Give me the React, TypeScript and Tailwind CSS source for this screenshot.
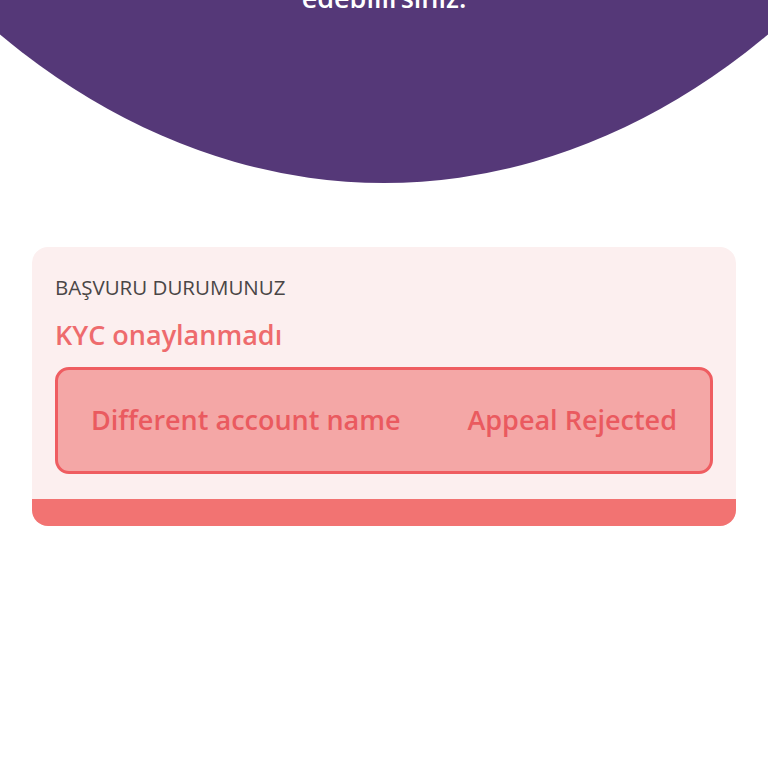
import React from "react";

export default function App() {
  return (
    <div
      className="relative min-h-[768px] w-[768px] overflow-hidden bg-white"
      style={{ fontFamily: "'Open Sans', 'Noto Sans', sans-serif" }}
    >
      <div className="absolute left-[-384px] top-[-2033px] h-[2216px] w-[1536px] rounded-[50%] bg-[#553878]" />
      <div className="relative flex h-[183px] flex-col items-center">
        <p className="mt-[-18px] text-[27px] font-semibold leading-[32px] text-white">
          edebilirsiniz.
        </p>
      </div>
      <div className="relative mx-8 mt-16 overflow-hidden rounded-2xl bg-[#fcefef]">
        <div className="px-[23px] pt-[27px] pb-[25px]">
          <p className="text-[20.5px] leading-[26px] text-[#4a4646]">BAŞVURU DURUMUNUZ</p>
          <p className="mt-[18px] text-[27px] font-semibold leading-[34px] text-[#ee6b6d]">
            KYC onaylanmadı
          </p>
          <div className="mt-[15px] flex h-[107px] items-center justify-between rounded-[14px] border-[3px] border-[#ef5d61] bg-[#f4a7a6] px-[33px]">
            <span className="text-[27px] font-semibold text-[#ea5a5f]">Different account name</span>
            <span className="text-[27px] font-semibold text-[#ea5a5f]">Appeal Rejected</span>
          </div>
        </div>
        <div className="h-[27px] bg-[#f27372]" />
      </div>
    </div>
  );
}
